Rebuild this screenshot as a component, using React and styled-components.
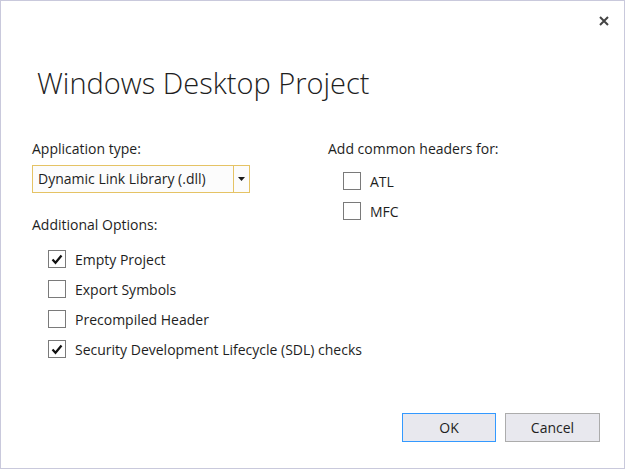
import styled, { createGlobalStyle } from "styled-components";

const GlobalStyle = createGlobalStyle`
  html, body {
    margin: 0;
    padding: 0;
    background: #ffffff;
  }

  body {
    font-family: "Open Sans", "Noto Sans", "Liberation Sans", sans-serif;
    color: #1e1e1e;
  }
`;

const Dialog = styled.div`
  width: 625px;
  height: 469px;
  box-sizing: border-box;
  border: 1px solid #c9c9dc;
  background: #ffffff;
  display: flex;
  flex-direction: column;
`;

const TitleBar = styled.div`
  height: 40px;
  display: flex;
  justify-content: flex-end;
  align-items: center;
  padding-right: 14px;
`;

const CloseButton = styled.button`
  width: 12px;
  height: 12px;
  padding: 0;
  border: 0;
  background: transparent;
  display: flex;
  align-items: center;
  justify-content: center;
  cursor: pointer;
`;

const Title = styled.h1`
  margin: 24px 0 0 36px;
  font-size: 29px;
  line-height: 36px;
  font-weight: 300;
  color: #1e1e1e;
`;

const Columns = styled.div`
  display: grid;
  grid-template-columns: 296px 1fr;
  padding-left: 31px;
  margin-top: 38px;
`;

const Column = styled.div`
  display: flex;
  flex-direction: column;
  white-space: nowrap;
`;

const Label = styled.div`
  font-size: 14px;
  line-height: 20px;
  margin-top: ${(p) => p.$gap || 0}px;
`;

const Select = styled.div`
  margin-top: 6px;
  width: 218px;
  height: 28px;
  box-sizing: border-box;
  border: 1px solid #e5c365;
  background: #fcfcfc;
  display: flex;
  align-items: stretch;
`;

const SelectValue = styled.div`
  flex: 1;
  font-size: 14px;
  line-height: 26px;
  padding-left: 5px;
`;

const SelectArrow = styled.div`
  width: 15px;
  border-left: 1px solid #e5c365;
  display: flex;
  align-items: center;
  justify-content: center;
`;

const OptionList = styled.div`
  display: flex;
  flex-direction: column;
  margin-top: ${(p) => p.$gap || 0}px;
  padding-left: ${(p) => p.$indent || 16}px;
`;

const OptionRow = styled.label`
  height: 30px;
  display: flex;
  align-items: center;
  gap: 9px;
  font-size: 14px;
`;

const Box = styled.span`
  flex: none;
  width: 18px;
  height: 18px;
  box-sizing: border-box;
  border: 1px solid #7a7a7a;
  background: #ffffff;
  display: flex;
  align-items: center;
  justify-content: center;
`;

const Footer = styled.div`
  margin-top: auto;
  display: flex;
  justify-content: flex-end;
  gap: 9px;
  padding: 0 24px 26px 0;
`;

const Button = styled.button`
  width: ${(p) => p.$width || 94}px;
  height: 29px;
  box-sizing: border-box;
  border: ${(p) => (p.$primary ? "1px solid #3399ff" : "1px solid #acacac")};
  background: #e8e8ee;
  font-family: inherit;
  font-size: 14px;
  color: #1e1e1e;
  padding: 0;
`;

const Check = () => (
  <svg width="12" height="11" viewBox="0 0 12 11">
    <path d="M1.5 5.5 L4.5 8.8 L10.5 1.5" fill="none" stroke="#111" strokeWidth="2.2" />
  </svg>
);

const Checkbox = ({ checked, label }) => (
  <OptionRow>
    <Box>{checked && <Check />}</Box>
    {label}
  </OptionRow>
);

const App = () => {
  return (
    <>
      <GlobalStyle />
      <Dialog>
        <TitleBar>
          <CloseButton aria-label="Close">
            <svg width="10" height="10" viewBox="0 0 10 10">
              <path d="M1 1 L9 9 M9 1 L1 9" stroke="#444" strokeWidth="2" />
            </svg>
          </CloseButton>
        </TitleBar>
        <Title>Windows Desktop Project</Title>
        <Columns>
          <Column>
            <Label>Application type:</Label>
            <Select>
              <SelectValue>Dynamic Link Library (.dll)</SelectValue>
              <SelectArrow>
                <svg width="7" height="4" viewBox="0 0 7 4">
                  <path d="M0 0 H7 L3.5 4 Z" fill="#1a1a1a" />
                </svg>
              </SelectArrow>
            </Select>
            <Label $gap={22}>Additional Options:</Label>
            <OptionList $gap={9}>
              <Checkbox checked label="Empty Project" />
              <Checkbox label="Export Symbols" />
              <Checkbox label="Precompiled Header" />
              <Checkbox checked label="Security Development Lifecycle (SDL) checks" />
            </OptionList>
          </Column>
          <Column>
            <Label>Add common headers for:</Label>
            <OptionList $gap={7} $indent={15}>
              <Checkbox label="ATL" />
              <Checkbox label="MFC" />
            </OptionList>
          </Column>
        </Columns>
        <Footer>
          <Button $primary $width={94}>OK</Button>
          <Button $width={95}>Cancel</Button>
        </Footer>
      </Dialog>
    </>
  );
};

export default App;
